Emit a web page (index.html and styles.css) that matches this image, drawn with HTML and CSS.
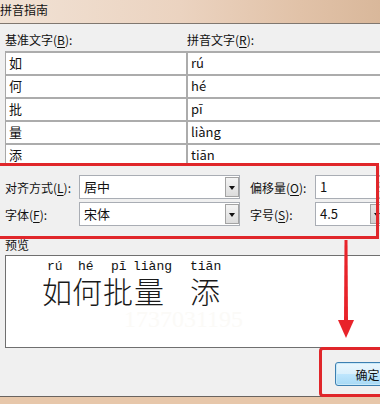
FILE: index.html
```html
<!DOCTYPE html>
<html lang="zh-CN">
<head>
    <meta charset="UTF-8">
    <meta name="viewport" content="width=device-width, initial-scale=1.0">
    <title>拼音指南</title>
    <link rel="stylesheet" href="styles.css">
</head>
<body>
    <div class="window">
        <div class="titlebar">拼音指南</div>

        <div class="dialog">
            <div class="heads">
                <span class="head-base">基准文字(<u>B</u>):</span>
                <span>拼音文字(<u>R</u>):</span>
            </div>

            <div class="grid">
                <div class="row"><div class="cell base">如</div><div class="cell">rú</div></div>
                <div class="row"><div class="cell base">何</div><div class="cell">hé</div></div>
                <div class="row"><div class="cell base">批</div><div class="cell">pī</div></div>
                <div class="row"><div class="cell base">量</div><div class="cell">liàng</div></div>
                <div class="row"><div class="cell base">添</div><div class="cell">tiān</div></div>
            </div>

            <div class="options">
                <div class="opt-row">
                    <span class="lbl-a">对齐方式(<u>L</u>):</span>
                    <div class="combo wide"><span class="combo-text">居中</span><span class="drop"></span></div>
                    <span class="lbl-b">偏移量(<u>O</u>):</span>
                    <div class="combo narrow">
                        <span class="combo-text">1</span>
                        <span class="spin"><span class="spin-up"></span><span class="spin-down"></span></span>
                    </div>
                </div>
                <div class="opt-row">
                    <span class="lbl-a">字体(<u>F</u>):</span>
                    <div class="combo wide"><span class="combo-text">宋体</span><span class="drop"></span></div>
                    <span class="lbl-b">字号(<u>S</u>):</span>
                    <div class="combo narrow"><span class="combo-text">4.5</span><span class="drop dark"></span></div>
                </div>
            </div>

            <div class="preview-label">预览</div>
            <div class="preview">
                <div class="ruby-line">
                    <div class="ruby w1"><span class="py" style="margin-left:5px">rú</span><span class="hz">如</span></div>
                    <div class="ruby w2"><span class="py" style="margin-left:6px">hé</span><span class="hz">何</span></div>
                    <div class="ruby w3"><span class="py" style="margin-left:8px">pī</span><span class="hz">批</span></div>
                    <div class="ruby w4"><span class="py">liàng</span><span class="hz" style="margin-left:1px">量</span></div>
                    <div class="ruby w5"><span class="py">tiān</span><span class="hz">添</span></div>
                </div>
                <div class="watermark">1737031195</div>
            </div>

            <div class="buttons">
                <button class="ok">确定</button>
            </div>
        </div>

        <!-- highlight marks drawn over the dialog -->
        <div class="mark mark-options"></div>
        <svg class="arrow" width="20" height="102" viewBox="0 0 20 102">
            <polygon points="8.5,2 11.5,2 12,84 8,84" fill="#e8232a"/>
            <polygon points="2,82 18,82 10,100" fill="#e8232a"/>
        </svg>
        <div class="mark mark-ok"></div>
    </div>
</body>
</html>
```

FILE: styles.css
```css
body {
    margin: 0;
    width: 380px;
    height: 404px;
    overflow: hidden;
    font-family: "Noto Sans CJK SC", "Liberation Sans", sans-serif;
    font-size: 12px;
    color: #111;
}
u {
    text-decoration-thickness: 1px;
    text-underline-offset: 2px;
}
.window {
    position: relative;
    width: 400px;
    height: 404px;
    background: #e7c7aa;
}
.titlebar {
    height: 24px;
    box-sizing: border-box;
    padding-top: 2px;
    line-height: 16px;
    border-bottom: 1px solid #80776f;
    background: linear-gradient(to right, #f1e2d5, #ebd3c0 45%, #e1c2a8 75%, #d7b597);
}
.dialog {
    height: 372px;
    background: #f0f0f0;
    border-bottom: 1px solid #6a6460;
}
.heads {
    display: flex;
    padding: 8px 0 3px 5px;
    line-height: 16px;
}
.head-base {
    width: 182px;
}
.grid {
    margin-left: 5px;
    border-left: 1px solid #a8a8a8;
    background: #fff;
}
.row {
    display: flex;
    height: 23px;
    box-sizing: border-box;
    border-top: 2px solid #acacac;
}
.cell {
    padding-left: 3px;
    line-height: 20px;
    font-size: 13px;
}
.cell.base {
    width: 177px;
    border-right: 2px solid #acacac;
}
.options {
    margin-top: 9px;
    padding-left: 5px;
}
.opt-row {
    display: flex;
    align-items: center;
    height: 24px;
}
.opt-row + .opt-row {
    margin-top: 3px;
}
.lbl-a {
    width: 74px;
}
.lbl-b {
    width: 65px;
    margin-left: 10px;
}
.combo {
    display: flex;
    align-items: stretch;
    height: 24px;
    box-sizing: border-box;
    border: 1px solid #a9adb4;
    background: #fff;
}
.combo.wide {
    width: 161px;
}
.combo.narrow {
    width: 72px;
}
.combo-text {
    padding-left: 4px;
    line-height: 22px;
    font-size: 13px;
}
.drop {
    position: relative;
    width: 14px;
    margin: 1px 0 1px auto;
    box-sizing: border-box;
    border: 1px solid #a3a3a3;
    background: linear-gradient(#f4f4f4, #dcdcdc);
}
.drop::after {
    content: "";
    position: absolute;
    left: 3px;
    top: 8px;
    border-left: 3px solid transparent;
    border-right: 3px solid transparent;
    border-top: 4px solid #111;
}
.drop.dark {
    margin-right: 0;
    width: 16px;
    background: linear-gradient(#e6e6e6, #cfcfcf);
}
.spin {
    display: flex;
    flex-direction: column;
    width: 12px;
    margin-left: auto;
    margin-right: -2px;
}
.spin-up, .spin-down {
    position: relative;
    flex: 1;
    border: 1px solid #c2c2c2;
    background: linear-gradient(#f7f7f7, #e4e4e4);
}
.spin-up::after, .spin-down::after {
    content: "";
    position: absolute;
    left: 2px;
    top: 3px;
    border-left: 3px solid transparent;
    border-right: 3px solid transparent;
}
.spin-up::after {
    border-bottom: 3px solid #8a8a8a;
}
.spin-down::after {
    border-top: 3px solid #8a8a8a;
}
.preview-label {
    margin-top: 11px;
    padding-left: 5px;
    line-height: 16px;
}
.preview {
    margin: 2px 0 0 5px;
    height: 93px;
    box-sizing: border-box;
    border: 1px solid #6f6f6f;
    background: #fff;
    padding: 3px 0 0 36px;
    overflow: hidden;
}
.ruby-line {
    display: flex;
}
.ruby {
    display: flex;
    flex-direction: column;
}
.w1 { width: 30px; }
.w2 { width: 31px; }
.w3 { width: 30px; }
.w4 { width: 57px; }
.w5 { width: 40px; }
.py {
    font-family: "Liberation Mono", "DejaVu Sans Mono", monospace;
    font-size: 13px;
    line-height: 15px;
    white-space: nowrap;
}
.hz {
    font-size: 30px;
    line-height: 32px;
    font-weight: 300;
    color: #1a1a1a;
}
.watermark {
    margin: 0 0 0 82px;
    font-family: "Liberation Serif", serif;
    font-size: 24px;
    line-height: 26px;
    color: #fbfaf7;
}
.buttons {
    display: flex;
    margin-top: 14px;
    padding-left: 335px;
}
.ok {
    width: 74px;
    height: 24px;
    padding: 0;
    font-family: "Noto Sans CJK SC", sans-serif;
    font-size: 12px;
    color: #111;
    border: 1px solid #3c7fb1;
    border-radius: 3px;
    background: linear-gradient(#eaf6fd, #d9f0fc 50%, #bee6fd 51%, #a7d9f5);
    box-shadow: inset 0 0 0 1px #c8e8f8;
}
.mark {
    position: absolute;
    box-sizing: border-box;
    border: 3px solid #e0262a;
}
.mark-options {
    left: -3px;
    top: 163px;
    width: 382px;
    height: 76px;
}
.mark-ok {
    left: 319px;
    top: 347px;
    width: 80px;
    height: 50px;
    border-radius: 4px;
}
.arrow {
    position: absolute;
    left: 336px;
    top: 238px;
}
```
